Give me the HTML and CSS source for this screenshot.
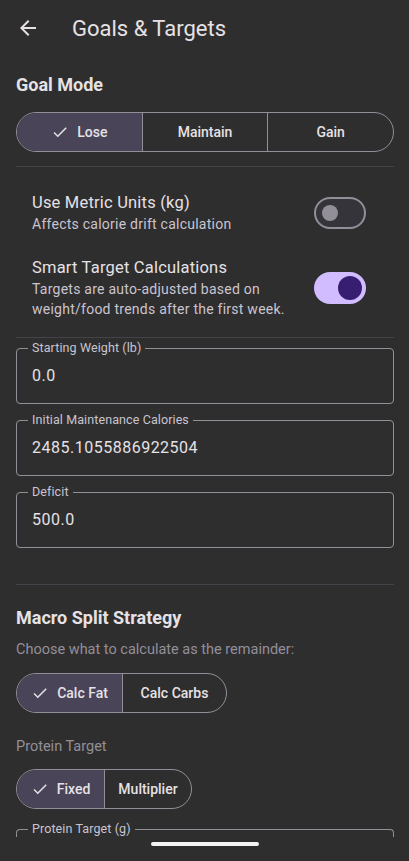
FILE: index.html
```html
<!DOCTYPE html>
<html lang="en">
<head>
  <meta charset="UTF-8" />
  <meta name="viewport" content="width=device-width, initial-scale=1.0"/>
  <title>Goals &amp; Targets</title>
  <link rel="stylesheet" href="styles.css">
</head>
<body>
  <header class="topbar">
    <button class="back" aria-label="Back">
      <svg width="24" height="24" viewBox="0 0 24 24"><path d="M20 11H7.83l5.59-5.59L12 4l-8 8 8 8 1.41-1.41L7.83 13H20v-2z" fill="#e6e1e5"/></svg>
    </button>
    <h1>Goals &amp; Targets</h1>
  </header>

  <main class="content">
    <h2 class="section-title">Goal Mode</h2>
    <div class="segmented seg-goal">
      <button class="seg selected"><svg class="check" width="18" height="18" viewBox="0 0 24 24"><path d="M9 16.17 4.83 12l-1.42 1.41L9 19 21 7l-1.41-1.41z" fill="#e6e1e5"/></svg>Lose</button>
      <button class="seg">Maintain</button>
      <button class="seg">Gain</button>
    </div>

    <hr class="divider first">

    <div class="switch-row">
      <div class="switch-text">
        <div class="switch-title">Use Metric Units (kg)</div>
        <div class="switch-sub">Affects calorie drift calculation</div>
      </div>
      <div class="switch off"><span class="thumb"></span></div>
    </div>

    <div class="switch-row second">
      <div class="switch-text">
        <div class="switch-title">Smart Target Calculations</div>
        <div class="switch-sub">Targets are auto-adjusted based on<br>weight/food trends after the first week.</div>
      </div>
      <div class="switch on"><span class="thumb"></span></div>
    </div>

    <hr class="divider after-switches">

    <div class="fields">
      <fieldset class="field">
        <legend>Starting Weight (lb)</legend>
        <div class="value">0.0</div>
      </fieldset>
      <fieldset class="field">
        <legend>Initial Maintenance Calories</legend>
        <div class="value">2485.1055886922504</div>
      </fieldset>
      <fieldset class="field">
        <legend>Deficit</legend>
        <div class="value">500.0</div>
      </fieldset>
    </div>

    <hr class="divider macro">

    <h2 class="section-title">Macro Split Strategy</h2>
    <p class="hint">Choose what to calculate as the remainder:</p>
    <div class="segmented seg-macro">
      <button class="seg selected"><svg class="check" width="18" height="18" viewBox="0 0 24 24"><path d="M9 16.17 4.83 12l-1.42 1.41L9 19 21 7l-1.41-1.41z" fill="#e6e1e5"/></svg>Calc Fat</button>
      <button class="seg">Calc Carbs</button>
    </div>

    <p class="hint protein">Protein Target</p>
    <div class="segmented seg-protein">
      <button class="seg selected"><svg class="check" width="18" height="18" viewBox="0 0 24 24"><path d="M9 16.17 4.83 12l-1.42 1.41L9 19 21 7l-1.41-1.41z" fill="#e6e1e5"/></svg>Fixed</button>
      <button class="seg">Multiplier</button>
    </div>

    <fieldset class="field partial">
      <legend>Protein Target (g)</legend>
    </fieldset>
  </main>

  <div class="navbar"><span class="handle"></span></div>
</body>
</html>
```

FILE: styles.css
```css
* {
  box-sizing: border-box;
}
html, body {
  margin: 0;
  height: 100%;
}
body {
  background: #2e2e2e;
  color: #e6e1e5;
  font-family: Roboto, "Noto Sans", sans-serif;
  width: 409px;
  height: 861px;
  overflow: hidden;
  position: relative;
}
.topbar {
  display: flex;
  align-items: center;
  height: 56px;
  padding: 0 0 0 16px;
}
.back {
  background: none;
  border: 0;
  padding: 0;
  width: 24px;
  height: 24px;
  margin-right: 32px;
}
.topbar h1 {
  margin: 0;
  font-size: 22px;
  font-weight: 400;
  color: #e6e1e5;
}
.content {
  padding: 0 15px 0 16px;
}
.section-title {
  margin: 18px 0 0;
  font-size: 18px;
  font-weight: 700;
  line-height: 22px;
  color: #e6e1e5;
}
.segmented {
  display: flex;
  border: 1px solid #938f99;
  border-radius: 20px;
  overflow: hidden;
  height: 40px;
  margin-top: 16px;
}
.seg {
  flex: 1;
  background: transparent;
  border: 0;
  border-left: 1px solid #938f99;
  color: #e6e1e5;
  font-family: Roboto, sans-serif;
  font-size: 14px;
  font-weight: 500;
  display: flex;
  align-items: center;
  justify-content: center;
  padding: 0;
}
.seg:first-child {
  border-left: 0;
}
.seg.selected {
  background: #4a4458;
}
.check {
  margin-right: 8px;
  flex: none;
}
.seg-macro {
  width: 211px;
  margin-top: 13px;
}
.seg-protein {
  width: 176px;
  margin-top: 12px;
}
.seg-macro .seg:first-child { flex: 0 0 105px; }
.seg-protein .seg:first-child { flex: 0 0 87px; }
.divider {
  border: 0;
  border-top: 1px solid #45434a;
  margin: 14px 0 0;
}
.switch-row {
  display: flex;
  align-items: center;
  justify-content: space-between;
  padding: 0 28px 0 16px;
  margin-top: 24px;
}
.switch-row.second {
  margin-top: 22px;
}
.switch-title {
  font-size: 16.5px;
  line-height: 23px;
  letter-spacing: 0.2px;
}
.switch-sub {
  font-size: 14px;
  line-height: 20px;
  color: #cac4d0;
  letter-spacing: 0.25px;
}
.switch {
  width: 52px;
  height: 32px;
  border-radius: 16px;
  position: relative;
  flex: none;
}
.switch.off {
  background: #36343b;
  border: 2px solid #938f99;
}
.switch.off .thumb {
  position: absolute;
  left: 6px;
  top: 6px;
  width: 16px;
  height: 16px;
  border-radius: 50%;
  background: #938f99;
}
.switch.on {
  background: #d0bcff;
}
.switch.on .thumb {
  position: absolute;
  right: 4px;
  top: 4px;
  width: 24px;
  height: 24px;
  border-radius: 50%;
  background: #381e72;
}
.divider.after-switches {
  margin-top: 18px;
}
.divider + .fields {
  margin-top: 3px;
}
.fields {
  display: flex;
  flex-direction: column;
  gap: 10px;
}
.field {
  margin: 0;
  border: 1px solid #938f99;
  border-radius: 4px;
  padding: 0 15px;
  height: 63px;
  min-width: 0;
}
.field legend {
  font-size: 12.5px;
  color: #cac4d0;
  padding: 0 4px;
  margin-left: -4px;
  line-height: 14px;
  letter-spacing: 0.1px;
}
.field .value {
  font-size: 16px;
  margin-top: 11px;
  letter-spacing: 0.5px;
}
.fields .field + .field {
  margin-top: -1px;
}
.divider.macro {
  margin-top: 36px;
}
.divider.macro + .section-title {
  margin-top: 22px;
}
.hint {
  margin: 11px 0 0;
  font-size: 14.5px;
  line-height: 20px;
  color: #938f99;
}
.hint.protein {
  margin-top: 24px;
}
.field.partial {
  margin-top: 13px;
  border-bottom: 0;
  border-radius: 4px 4px 0 0;
  height: 40px;
}
.navbar {
  position: absolute;
  left: 0;
  right: 0;
  bottom: 0;
  height: 24px;
  display: flex;
  justify-content: center;
  align-items: flex-start;
  background: #2e2e2e;
}
.handle {
  width: 108px;
  height: 4px;
  border-radius: 2px;
  background: #f4f4f4;
  margin-top: 5px;
}
```
